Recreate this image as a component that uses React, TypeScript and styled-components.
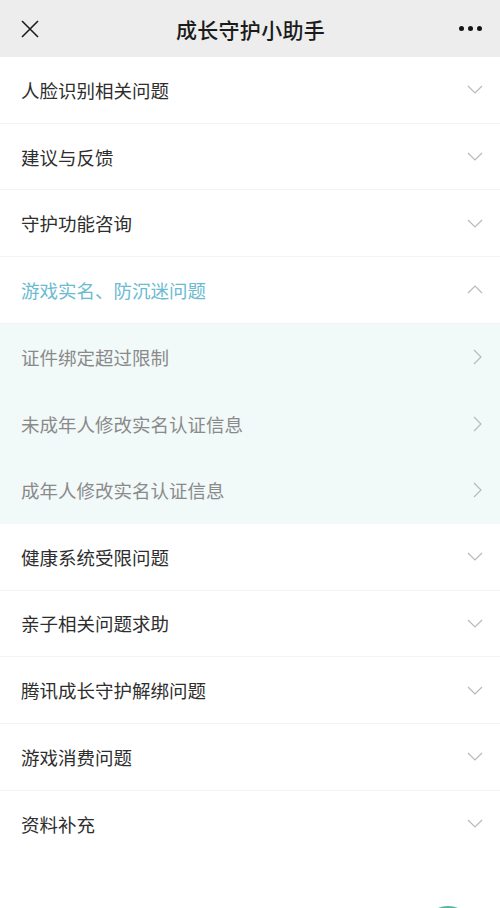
import styled, { createGlobalStyle } from "styled-components";

const GlobalStyle = createGlobalStyle`
  html, body {
    margin: 0;
    padding: 0;
    background: #ffffff;
  }
  body {
    font-family: "Noto Sans CJK SC", "Noto Sans", sans-serif;
    -webkit-font-smoothing: antialiased;
  }
`;

type Section = {
  title: string;
  open?: boolean;
  items?: string[];
};

const sections: Section[] = [
  { title: "人脸识别相关问题" },
  { title: "建议与反馈" },
  { title: "守护功能咨询" },
  {
    title: "游戏实名、防沉迷问题",
    open: true,
    items: ["证件绑定超过限制", "未成年人修改实名认证信息", "成年人修改实名认证信息"],
  },
  { title: "健康系统受限问题" },
  { title: "亲子相关问题求助" },
  { title: "腾讯成长守护解绑问题" },
  { title: "游戏消费问题" },
  { title: "资料补充" },
];

const ChevronDown = () => (
  <svg width="16" height="9" viewBox="0 0 16 9" fill="none">
    <path d="M1 1l7 7 7-7" stroke="#b9b9b9" strokeWidth="1.2" />
  </svg>
);

const ChevronUp = () => (
  <svg width="16" height="9" viewBox="0 0 16 9" fill="none">
    <path d="M1 8l7-7 7 7" stroke="#b9b9b9" strokeWidth="1.2" />
  </svg>
);

const ChevronRight = () => (
  <svg width="9" height="16" viewBox="0 0 9 16" fill="none">
    <path d="M1 1l7 7-7 7" stroke="#b9b9b9" strokeWidth="1.2" />
  </svg>
);

const App = () => {
  return (
    <Page>
      <GlobalStyle />
      <Header>
        <IconButton aria-label="close">
          <svg width="18" height="18" viewBox="0 0 18 18" fill="none">
            <path d="M1 1l16 16M17 1L1 17" stroke="#1c1c1c" strokeWidth="1.6" />
          </svg>
        </IconButton>
        <Title>成长守护小助手</Title>
        <IconButton aria-label="more">
          <Dots>
            <span />
            <span />
            <span />
          </Dots>
        </IconButton>
      </Header>
      <List>
        {sections.map((s) => (
          <Group key={s.title}>
            <Row>
              <RowText active={!!s.open}>{s.title}</RowText>
              {s.open ? <ChevronUp /> : <ChevronDown />}
            </Row>
            {s.open && s.items && (
              <SubList>
                {s.items.map((item) => (
                  <SubRow key={item}>
                    <SubText>{item}</SubText>
                    <ChevronRight />
                  </SubRow>
                ))}
              </SubList>
            )}
          </Group>
        ))}
      </List>
      <FloatButton />
    </Page>
  );
};

const Page = styled.div`
  width: 500px;
  height: 908px;
  position: relative;
  overflow: hidden;
  background: #ffffff;
`;

const Header = styled.div`
  height: 57px;
  background: #ededed;
  display: flex;
  align-items: center;
  justify-content: space-between;
  padding: 0 14px 0 15px;
  box-sizing: border-box;
`;

const IconButton = styled.div`
  width: 30px;
  height: 30px;
  display: flex;
  align-items: center;
  justify-content: center;
`;

const Title = styled.div`
  font-size: 21px;
  font-weight: 500;
  color: #1b1b1b;
  letter-spacing: 0.3px;
`;

const Dots = styled.div`
  display: flex;
  gap: 4px;
  span {
    width: 5px;
    height: 5px;
    border-radius: 50%;
    background: #151515;
  }
`;

const List = styled.div`
  display: flex;
  flex-direction: column;
`;

const Group = styled.div`
  display: flex;
  flex-direction: column;
  &:last-child > div {
    border-bottom: none;
  }
`;

const Row = styled.div`
  height: 66.7px;
  box-sizing: border-box;
  display: flex;
  align-items: center;
  justify-content: space-between;
  padding: 0 17px 0 21px;
  border-bottom: 1px solid #f3f3f3;
`;

const RowText = styled.div<{ active: boolean }>`
  font-size: 18.5px;
  color: ${({ active }) => (active ? "#6bbbd1" : "#2e2e2e")};
`;

const SubList = styled.div`
  background: #f1f9f9;
  display: flex;
  flex-direction: column;
`;

const SubRow = styled.div`
  height: 66.7px;
  display: flex;
  align-items: center;
  justify-content: space-between;
  padding: 0 18px 0 21px;
`;

const SubText = styled.div`
  font-size: 18.5px;
  color: #8a8a8a;
`;

const FloatButton = styled.div`
  position: absolute;
  left: 421px;
  bottom: -52px;
  width: 54px;
  height: 54px;
  border-radius: 50%;
  background: #4fb89e;
`;

export default App;
